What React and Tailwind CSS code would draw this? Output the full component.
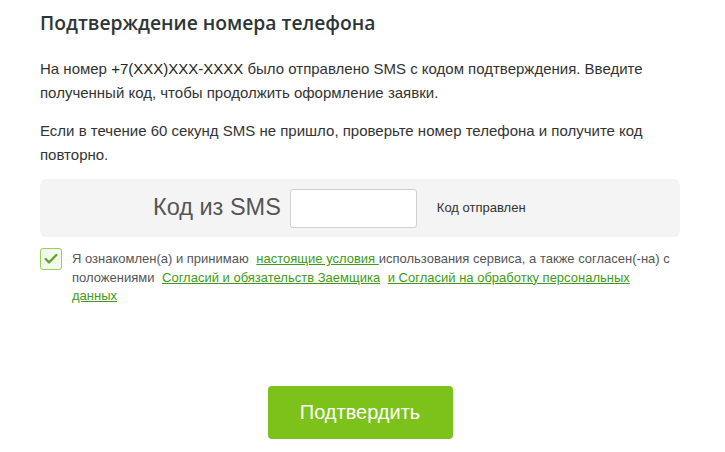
import { Check } from 'lucide-react';

export default function App() {
  return (
    <div className="min-h-[452px] w-[725px] bg-white font-['Liberation_Sans',Arial,sans-serif] text-[#333]">
      <div className="w-[720px] px-10 pt-[9px]">
        <h1 className="font-['Open_Sans',sans-serif] text-[19.3px] font-semibold leading-[28px] text-[#2d3436]">
          Подтверждение номера телефона
        </h1>

        <div className="w-[640px]">
          <p className="mt-[20px] text-[15px] leading-[24px]">
            На номер <span className="text-[#222]">+7(XXX)XXX-XXXX</span> было отправлено SMS с кодом подтверждения. Введите
            полученный код, чтобы продолжить оформление заявки.
          </p>

          <p className="mt-[14px] text-[15px] leading-[24px]">
            Если в течение 60 секунд SMS не пришло, проверьте номер телефона и получите код повторно.
          </p>

          <div className="mt-[12px] flex h-[58px] items-center rounded-md bg-[#f4f4f4] pl-[113px]">
            <span className="text-[23.5px] text-[#555]">Код из SMS</span>
            <input
              type="text"
              className="ml-[9px] h-[39px] w-[127px] rounded-[3px] border border-[#d0d0d0] bg-white px-2 outline-none"
            />
            <span className="ml-5 text-[13px] text-[#333]">Код отправлен</span>
          </div>

          <div className="mt-[11px] flex gap-[10px]">
            <div className="flex h-[22px] w-[22px] shrink-0 items-center justify-center rounded-[3px] border border-[#9ccc5a] bg-[#f3f9ea]">
              <Check size={16} strokeWidth={3.5} className="text-[#5aa52a]" />
            </div>
            <p className="w-[602px] pt-[2px] text-[13px] leading-[18.5px] text-[#555]">
              Я ознакомлен(а) и принимаю{' '}
              <a href="#" className="ml-1 text-[#3f9a16] underline">настоящие условия </a>
              использования сервиса, а также согласен(-на) с положениями{' '}
              <a href="#" className="ml-1 text-[#3f9a16] underline">Согласий и обязательств Заемщика</a>{' '}
              <a href="#" className="ml-1 text-[#3f9a16] underline">и Согласий на обработку персональных данных</a>
            </p>
          </div>

          <div className="mt-[80px] flex justify-center">
            <button
              type="button"
              className="h-[53px] w-[185px] rounded-[4px] bg-[#7cc21a] text-[20px] text-white"
            >
              Подтвердить
            </button>
          </div>
        </div>
      </div>
    </div>
  );
}
